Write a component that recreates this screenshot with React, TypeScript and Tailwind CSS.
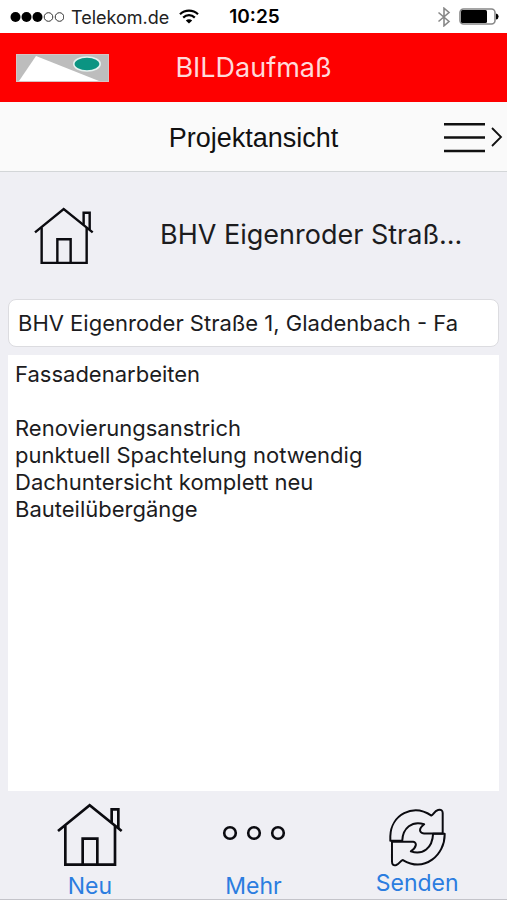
import { useState } from 'react';

const NOTES = `Fassadenarbeiten

Renovierungsanstrich
punktuell Spachtelung notwendig
Dachuntersicht komplett neu
Bauteilübergänge`;

function HouseIcon({ className }: { className: string }) {
  return (
    <svg viewBox="174 72 198 192" className={className} fill="none" stroke="#0b0b10" strokeWidth="8" aria-hidden="true">
      <path d="M177 156 L272 79 L368 156" />
      <path d="M199 140 V257 H348 V140" />
      <path d="M251 257 V179 H295 V257" />
      <path d="M338 131 V91 H358 V147" />
    </svg>
  );
}

function DotsIcon() {
  return (
    <svg viewBox="0 0 64 16" className="h-4 w-16" fill="none" stroke="#0b0b10" strokeWidth="2.6" aria-hidden="true">
      <circle cx="8" cy="8" r="5.8" />
      <circle cx="32" cy="8" r="5.8" />
      <circle cx="56" cy="8" r="5.8" />
    </svg>
  );
}

function SyncIcon() {
  return (
    <svg
      viewBox="26 16 176 184"
      className="h-[61px] w-[59px]"
      fill="none"
      stroke="#0b0b10"
      strokeWidth="6"
      strokeLinejoin="round"
      aria-hidden="true"
    >
      <path d="M32 118 V104 C34 40 100 4 156 42 C161 41 165 28 176 25 Q190 22 190 34 V96 H134 C118 94 117 81 134 68 C98 56 69 80 68 118 Z" />
      <path d="M37 121 H101 C113 123 112 137 94 150 C130 162 159 140 161 97 H196 C197 160 136 215 70 176 C63 177 60 187 50 191 Q37 195 37 180 Z" />
    </svg>
  );
}

function StatusBar() {
  return (
    <div className="flex h-[33px] items-center bg-white pl-[10px] pr-2 text-black">
      <div className="flex flex-1 items-center">
        <svg viewBox="0 0 54 12" className="mr-[7px] h-3 w-[54px]" aria-hidden="true">
          <circle cx="5.5" cy="6" r="5" />
          <circle cx="16.5" cy="6" r="5" />
          <circle cx="27.5" cy="6" r="5" />
          <circle cx="38.5" cy="6" r="4.3" fill="none" stroke="#333" />
          <circle cx="49.5" cy="6" r="4.3" fill="none" stroke="#333" />
        </svg>
        <span className="pt-px text-[18px] text-[#222]">Telekom.de</span>
        <svg viewBox="0 0 20 15" className="ml-[10px] h-[15px] w-5" fill="none" stroke="#000" strokeWidth="2.2" aria-hidden="true">
          <path d="M1 5.2 C6 0.4 14 0.4 19 5.2" />
          <path d="M4.2 8.6 C7.5 5.4 12.5 5.4 15.8 8.6" />
          <path d="M10 14.6 L6.8 11.4 C8.6 9.8 11.4 9.8 13.2 11.4 Z" fill="#000" stroke="none" />
        </svg>
      </div>
      <span className="pt-[2px] text-[19px] font-semibold">10:25</span>
      <div className="flex flex-1 items-center justify-end gap-2">
        <svg viewBox="0 0 14 20" className="h-5 w-[14px]" fill="none" stroke="#888" strokeWidth="1.6" aria-hidden="true">
          <path d="M1.5 5.5 L12 14.5 L7 18.8 V1.2 L12 5.5 L1.5 14.5" />
        </svg>
        <svg viewBox="0 0 40 17" className="h-[17px] w-10" aria-hidden="true">
          <rect x="1" y="1" width="35" height="15" rx="3.5" fill="#fff" stroke="#888" strokeWidth="1.6" />
          <rect x="2" y="2" width="26" height="13" rx="1.5" />
          <path d="M37 5.5 Q39.6 6 39.6 8.5 Q39.6 11 37 11.5 Z" />
        </svg>
      </div>
    </div>
  );
}

function Logo() {
  return (
    <svg viewBox="0 0 93 28" className="h-7 w-[93px]" role="img" aria-label="Logo">
      <rect width="93" height="28" fill="#bdbdbd" />
      <rect x="0.5" y="0.5" width="92" height="27" fill="none" stroke="#d6c4c4" />
      <path d="M3 27 L20 2 L83 27 Z" fill="#fff" />
      <ellipse cx="71" cy="10" rx="13.2" ry="7" fill="#0b9482" stroke="#e6f2f0" strokeWidth="1.6" />
    </svg>
  );
}

export default function App() {
  const [title, setTitle] = useState('BHV Eigenroder Straße 1, Gladenbach - Fa');
  const [notes, setNotes] = useState(NOTES);

  return (
    <div className="flex min-h-screen flex-col border-b border-[#c4c4ca] bg-[#efeff4] font-['Inter',sans-serif] text-[#1c1c1e]">
      <StatusBar />

      <header className="grid h-[69px] grid-cols-[1fr_auto_1fr] items-center bg-[#fe0000] px-4">
        <Logo />
        <h1 className="pt-[2px] text-[27px] text-[#ffd9d9]">BILDaufmaß</h1>
      </header>

      <nav className="grid h-[70px] grid-cols-[1fr_auto_1fr] items-center border-b border-[#d3d6d8] bg-[#fafafa] pl-1 pr-1 pt-1">
        <h2 className="col-start-2 font-['Liberation_Sans',sans-serif] text-[27px] text-[#111]">Projektansicht</h2>
        <button type="button" aria-label="Menü" className="flex items-center justify-self-end">
          <svg viewBox="0 0 60 32" className="h-8 w-[60px]" fill="none" stroke="#111" aria-hidden="true">
            <path d="M1 1.2 H42 M1 14.5 H42 M1 28 H42" strokeWidth="2.4" />
            <path d="M49 5 L58 14 L49 23" strokeWidth="1.8" />
          </svg>
        </button>
      </nav>

      <main className="flex flex-1 flex-col px-2">
        <div className="flex h-[127px] items-center pl-[26px]">
          <HouseIcon className="h-[58px] w-[60px]" />
          <h3 className="flex-1 pl-[66px] text-[27px]">BHV Eigenroder Straß...</h3>
        </div>
        <input
          type="text"
          aria-label="Projekt"
          value={title}
          onChange={(e) => setTitle(e.target.value)}
          className="h-12 w-full rounded-lg border border-[#dcdce0] bg-white px-[9px] text-[22px] outline-none"
        />
        <textarea
          aria-label="Beschreibung"
          value={notes}
          onChange={(e) => setNotes(e.target.value)}
          className="mt-2 w-full flex-1 resize-none bg-white px-[7px] py-[6px] text-[22px] leading-[27px] outline-none"
        />
      </main>

      <footer className="flex h-[108px] px-2 text-[23px] leading-[26px] text-[#2b7de0]">
        <button type="button" className="flex flex-1 flex-col items-center justify-end">
          <HouseIcon className="mb-[6px] h-16 w-[66px]" />
          Neu
        </button>
        <button type="button" className="flex flex-1 flex-col items-center justify-end">
          <DotsIcon />
          <span className="pt-8">Mehr</span>
        </button>
        <button type="button" className="flex flex-1 flex-col items-center justify-end pb-[3px]">
          <SyncIcon />
          <span className="pt-[2px]">Senden</span>
        </button>
      </footer>
    </div>
  );
}
